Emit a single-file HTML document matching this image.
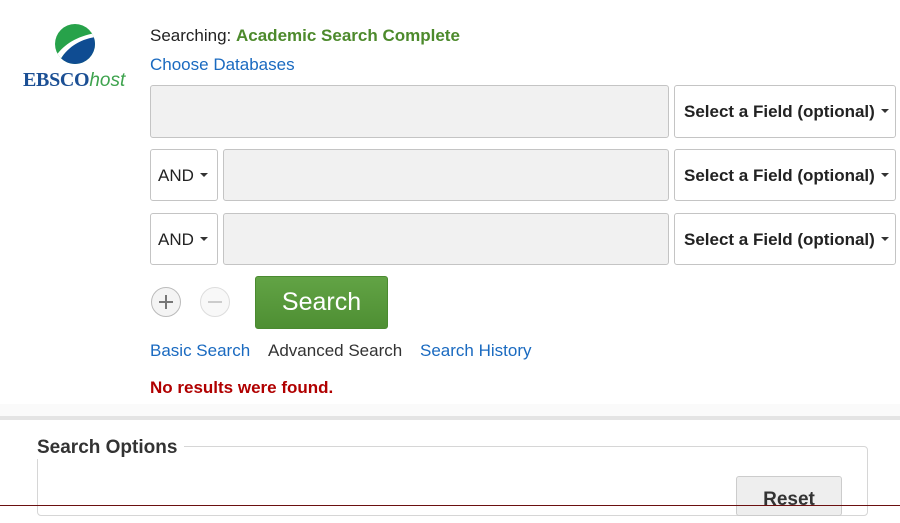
<!DOCTYPE html>
<html><head><meta charset="utf-8"><style>
*{box-sizing:border-box;margin:0;padding:0}
body{width:900px;height:506px;overflow:hidden;background:#fff;font-family:"Liberation Sans",Arial,sans-serif;position:relative}
.a{position:absolute}
.inp{position:absolute;background:#f1f1f1;border:1px solid #c4c4c4;border-radius:3px}
.sel{position:absolute;background:#fff;border:1px solid #c4c4c4;border-radius:3px;font-weight:bold;font-size:17px;color:#222;padding-left:9px;line-height:52px}
.car{display:inline-block;width:0;height:0;border-left:4px solid transparent;border-right:4px solid transparent;border-top:4px solid #333;vertical-align:middle;margin-left:6px;margin-top:-3px}
.and{position:absolute;background:#fff;border:1px solid #c4c4c4;border-radius:3px;font-size:17px;color:#222;padding-left:7px;line-height:52px}
.lnk{color:#1a6ac0;font-size:17px}
</style></head><body>
<svg class="a" style="left:54px;top:24px" width="42" height="40" viewBox="0 0 42 40">
<defs><clipPath id="c"><ellipse cx="21" cy="20" rx="20" ry="20"/></clipPath></defs>
<g clip-path="url(#c)">
<rect x="0" y="0" width="42" height="40" fill="#27a24a"/>
<path d="M4 40 C12 24 24 14 42 12 L42 40 Z" fill="#0f4c92"/>
<path d="M2 32 C10 20 24 12 42 9 L42 13 C26 15 12 24 5 38 Z" fill="#fff"/>
</g></svg>
<div class="a" style="left:23px;top:69px;font-family:'Liberation Serif',serif;font-weight:bold;font-size:20px;color:#1b4f94;letter-spacing:-0.3px">EBSCO<span style="font-family:'Liberation Sans',sans-serif;font-weight:normal;font-style:italic;color:#3ea34e;font-size:19px;letter-spacing:0">host</span></div>
<div class="a" style="left:150px;top:26px;font-size:17px;color:#222">Searching: <b style="color:#4d8a2c">Academic Search Complete</b></div>
<div class="a lnk" style="left:150px;top:55px">Choose Databases</div>
<div class="inp" style="left:150px;top:85px;width:519px;height:53px"></div>
<div class="sel" style="left:674px;top:85px;width:222px;height:53px">Select a Field (optional)<span class="car"></span></div>
<div class="and" style="left:150px;top:149px;width:68px;height:52px">AND<span class="car"></span></div>
<div class="inp" style="left:223px;top:149px;width:446px;height:52px"></div>
<div class="sel" style="left:674px;top:149px;width:222px;height:52px">Select a Field (optional)<span class="car"></span></div>
<div class="and" style="left:150px;top:213px;width:68px;height:52px">AND<span class="car"></span></div>
<div class="inp" style="left:223px;top:213px;width:446px;height:52px"></div>
<div class="sel" style="left:674px;top:213px;width:222px;height:52px">Select a Field (optional)<span class="car"></span></div>
<svg class="a" style="left:150px;top:286px" width="32" height="32"><circle cx="16" cy="16" r="14.5" fill="#f4f4f4" stroke="#bbb"/><path d="M9 16H23M16 9V23" stroke="#777" stroke-width="2"/></svg>
<svg class="a" style="left:199px;top:286px" width="32" height="32"><circle cx="16" cy="16" r="14.5" fill="#f8f8f8" stroke="#ddd"/><path d="M9 16H23" stroke="#ccc" stroke-width="2"/></svg>
<div class="a" style="left:255px;top:276px;width:133px;height:53px;background:linear-gradient(#62a345,#4e8f33);border:1px solid #4a8a30;border-radius:3px;color:#fff;font-size:25px;text-align:center;line-height:51px">Search</div>
<div class="a lnk" style="left:150px;top:341px">Basic Search</div>
<div class="a" style="left:268px;top:341px;font-size:17px;color:#333">Advanced Search</div>
<div class="a lnk" style="left:420px;top:341px">Search History</div>
<div class="a" style="left:150px;top:378px;font-size:17px;font-weight:bold;color:#b00000">No results were found.</div>
<div class="a" style="left:0;top:404px;width:900px;height:14px;background:#fafafa"></div>
<div class="a" style="left:0;top:416px;width:900px;height:4px;background:#e4e4e4"></div>
<div class="a" style="left:37px;top:446px;width:831px;height:70px;border:1px solid #d6d6d6;border-radius:4px"></div>
<div class="a" style="left:30px;top:437px;background:#fff;padding:0 7px;font-size:19px;font-weight:bold;color:#333">Search Options</div>
<div class="a" style="left:736px;top:476px;width:106px;height:40px;background:#eee;border:1px solid #ccc;border-radius:3px;font-size:19px;font-weight:bold;color:#333;text-align:center;line-height:46px">Reset</div>
<div class="a" style="left:0;top:505px;width:900px;height:1px;background:#6b1010"></div>
</body></html>
